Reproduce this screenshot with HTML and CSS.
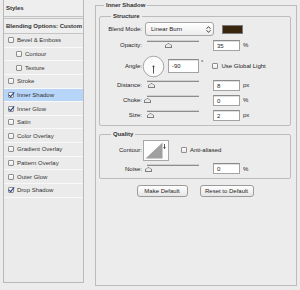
FILE: index.html
```html
<!DOCTYPE html>
<html lang="en">
<head>
    <meta charset="utf-8">
    <title>Layer Style</title>
    <link rel="stylesheet" href="styles.css">
</head>

<body>
    <div class="dialog">
        <div class="styles">
            <div class="styles-head">Styles</div>
            <div class="styles-blend">Blending Options: Custom</div>
            <ul class="fx-list">
                <li><span class="cb"></span>Bevel &amp; Emboss</li>
                <li class="sub"><span class="cb"></span>Contour</li>
                <li class="sub"><span class="cb"></span>Texture</li>
                <li><span class="cb"></span>Stroke</li>
                <li class="active"><span class="cb on"></span>Inner Shadow</li>
                <li><span class="cb on"></span>Inner Glow</li>
                <li><span class="cb"></span>Satin</li>
                <li><span class="cb"></span>Color Overlay</li>
                <li><span class="cb"></span>Gradient Overlay</li>
                <li><span class="cb"></span>Pattern Overlay</li>
                <li><span class="cb"></span>Outer Glow</li>
                <li><span class="cb on"></span>Drop Shadow</li>
            </ul>
        </div>

        <fieldset class="effect">
            <legend>Inner Shadow</legend>

            <fieldset class="group structure">
                <legend>Structure</legend>
                <div class="row row-blend">
                    <label>Blend Mode:</label>
                    <div class="select">Linear Burn
                        <svg class="updown" width="5" height="7" viewBox="0 0 5 7">
                            <path d="M0.5 2.8 L2.5 0.6 L4.5 2.8 M0.5 4.2 L2.5 6.4 L4.5 4.2" fill="none" stroke="#333" stroke-width="0.9"/>
                        </svg>
                    </div>
                    <span class="swatch"></span>
                </div>
                <div class="row row-opacity">
                    <label>Opacity:</label>
                    <div class="slider"><span class="thumb" style="left: 18px"></span></div>
                    <span class="field">35</span><span class="unit">%</span>
                </div>
                <div class="row row-angle">
                    <label>Angle:</label>
                    <svg class="dial" width="23" height="23" viewBox="0 0 23 23">
                        <circle cx="11.5" cy="11.5" r="10.3" fill="#fbfbfb" stroke="#9c9c9c" stroke-width="0.9"/>
                        <line x1="11.5" y1="11.5" x2="11.5" y2="18.5" stroke="#444" stroke-width="0.9"/>
                        <circle cx="11.5" cy="11.5" r="1" fill="#444"/>
                    </svg>
                    <span class="field field-angle">-90</span><span class="deg">°</span>
                    <span class="cb"></span><span class="check-label">Use Global Light</span>
                </div>
                <div class="row row-distance">
                    <label>Distance:</label>
                    <div class="slider"><span class="thumb" style="left: 1px"></span></div>
                    <span class="field">8</span><span class="unit">px</span>
                </div>
                <div class="row row-choke">
                    <label>Choke:</label>
                    <div class="slider"><span class="thumb" style="left: -3px"></span></div>
                    <span class="field">0</span><span class="unit">%</span>
                </div>
                <div class="row row-size">
                    <label>Size:</label>
                    <div class="slider"><span class="thumb" style="left: 0px"></span></div>
                    <span class="field">2</span><span class="unit">px</span>
                </div>
            </fieldset>

            <fieldset class="group quality">
                <legend>Quality</legend>
                <div class="row row-contour">
                    <label>Contour:</label>
                    <svg class="contour" width="26" height="21" viewBox="0 0 26 21">
                        <rect x="0.5" y="0.5" width="25" height="20" fill="#fdfdfd" stroke="#a8a8a8"/>
                        <polygon points="2.5,18.5 19.5,2.5 19.5,18.5" fill="#a0a0a0"/>
                        <path d="M21.5 4 L21.5 8.5 M20.5 7.3 L21.5 8.6 L22.5 7.3" fill="none" stroke="#333" stroke-width="0.8"/>
                    </svg>
                    <span class="cb"></span><span class="check-label">Anti-aliased</span>
                </div>
                <div class="row row-noise">
                    <label>Noise:</label>
                    <div class="slider"><span class="thumb" style="left: -2px"></span></div>
                    <span class="field">0</span><span class="unit">%</span>
                </div>
            </fieldset>

            <div class="buttons">
                <button class="btn btn-make">Make Default</button>
                <button class="btn btn-reset">Reset to Default</button>
            </div>
        </fieldset>
    </div>
</body>
</html>
```

FILE: styles.css
```css
*{margin:0; padding:0; box-sizing:border-box; list-style:none;}
body{
    width:300px; height:290px;
    overflow:hidden;
    background:#ececec;
    font:6px "Liberation Sans", Arial, sans-serif;
    color:#1e1e1e;
}
.dialog{
    display:flex;
    align-items:flex-start;
    padding:0 3px;
    gap:11px;
}

/* left column */
.styles{
    width:81px; height:283px;
    border:1px solid #b9b9b9;
    border-top:none;
    background:#ebebeb;
}
.styles-head{
    height:17px; line-height:17px;
    padding-left:2px;
    border-bottom:1px solid #c4c4c4;
    background:#eeeeee;
    font-weight:bold; color:#333;
}
.styles-blend{
    height:16px; line-height:14px;
    margin-top:1px;
    padding-left:2px;
    border-top:1px solid #c4c4c4;
    border-bottom:1px solid #c4c4c4;
    background:#eeeeee;
    font-weight:bold; color:#333;
}
.fx-list li{
    display:flex; align-items:center;
    height:13.65px;
    padding-left:4px;
    border-bottom:1px solid #f8f8f8;
    color:#333;
}
.fx-list li.sub{ padding-left:12px; }
.fx-list li.active{ background:#b6d5f8; }

.cb{
    position:relative;
    width:6px; height:6px;
    margin-right:3px;
    flex:none;
    border:1px solid #8e8e8e;
    border-radius:1px;
    background:linear-gradient(#ffffff, #e9e9e9);
}
.cb.on::after{
    content:"";
    position:absolute;
    left:1px; top:-2px;
    width:2px; height:5px;
    border:solid #1f3d8c;
    border-width:0 1.3px 1.3px 0;
    transform:rotate(40deg);
}

/* right side */
.effect{
    width:202px; height:286px;
    border:1px solid #bcbcbc;
    padding:1px 5px 0 3px;
}
.effect > legend{
    margin-left:5px;
    padding:0 2px;
    line-height:10px;
    font-weight:bold; color:#333;
}
.group{
    border:1px solid #bcbcbc;
    border-radius:2px;
}
.group > legend{
    margin-left:11px;
    padding:0 2px;
    line-height:10px;
    font-weight:bold; color:#333;
}
.structure{ padding:0 0 4px; }
.quality{ margin-top:3px; padding:0 0 4px; }

.row{
    display:flex; align-items:center;
}
.row label{
    width:42px;
    text-align:right;
    flex:none;
}
.row-blend{ height:14px; margin-top:1px; }
.row-opacity{ height:12px; margin-top:3px; }
.row-angle{ height:22px; margin-top:4px; }
.row-distance{ height:12px; margin-top:2px; }
.row-choke{ height:12px; margin-top:3px; }
.row-size{ height:12px; margin-top:3px; }
.row-contour{ height:20px; margin-top:1px; }
.row-noise{ height:11px; margin-top:3px; }

.select{
    position:relative;
    width:69px; height:14px;
    margin-left:3px;
    padding-left:5px;
    line-height:13px;
    border:1px solid #a6a6a6;
    border-radius:3px;
    background:linear-gradient(#ffffff, #ececec);
}
.updown{
    position:absolute;
    right:2px; top:3px;
}
.swatch{
    width:21px; height:9px;
    margin-left:8px;
    border:1px solid #7b7b7b;
    background:#3a250f;
}

.slider{
    position:relative;
    align-self:flex-start;
    width:52px; height:100%;
    margin:2px 14px 0 5px;
    border-top:1px solid #8d8d8d;
    box-shadow:0 -1px 0 #d0d0d0;
}
.thumb{
    position:absolute;
    top:1px;
    width:7px; height:5px;
    background:linear-gradient(#f6f6f6, #d2d2d2);
    clip-path:polygon(50% 0, 100% 45%, 100% 100%, 0 100%, 0 45%);
}
.thumb::before{
    content:"";
    position:absolute;
    inset:0.8px;
    background:#eaeaea;
    clip-path:polygon(50% 0, 100% 45%, 100% 100%, 0 100%, 0 45%);
}
.thumb{ background:#7e7e7e; }

.field{
    width:27px; height:11px;
    padding-left:3px;
    line-height:10px;
    border:1px solid #a3a3a3;
    border-top-color:#8a8a8a;
    background:#ffffff;
    box-shadow:inset 0 1px 0 #e0e0e0;
}
.unit{ margin-left:3px; }

.dial{ margin-left:0; flex:none; }
.field-angle{ width:31px; height:14px; line-height:13px; margin-left:3px; }
.deg{ align-self:flex-start; margin:4px 9px 0 2px; }
.check-label{ color:#222; }

.contour{ margin-left:1px; margin-right:12px; flex:none; }

.buttons{
    display:flex; justify-content:center;
    gap:12px;
    margin-top:6px;
}
.btn{
    height:12px;
    border:1px solid #9b9b9b;
    border-radius:3px;
    background:linear-gradient(#ffffff, #e6e6e6);
    font:6px "Liberation Sans", Arial, sans-serif;
    color:#1e1e1e;
}
.btn-make{ width:51px; }
.btn-reset{ width:54px; }
```
